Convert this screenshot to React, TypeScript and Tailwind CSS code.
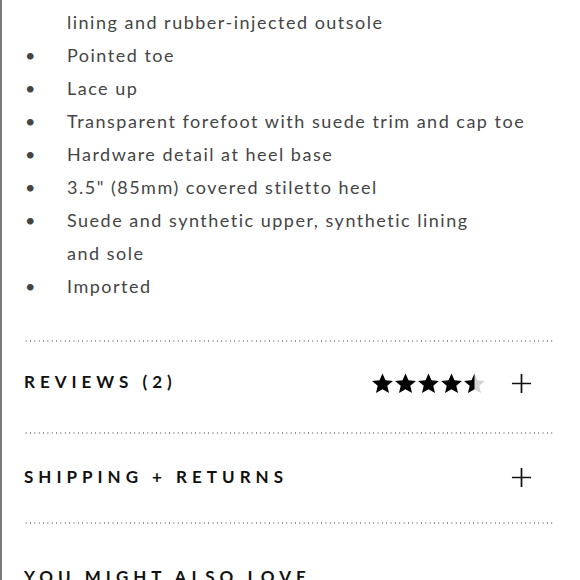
import React from 'react'

const details = [
  { text: 'Suede and leather upper with a cushioned insole, leather', bullet: false },
  { text: 'lining and rubber-injected outsole', bullet: false },
  { text: 'Pointed toe', bullet: true },
  { text: 'Lace up', bullet: true },
  { text: 'Transparent forefoot with suede trim and cap toe', bullet: true },
  { text: 'Hardware detail at heel base', bullet: true },
  { text: '3.5" (85mm) covered stiletto heel', bullet: true },
  { text: 'Suede and synthetic upper, synthetic lining', bullet: true },
  { text: 'and sole', bullet: false },
  { text: 'Imported', bullet: true },
]

const Dotted = () => (
  <div className="h-[2px] w-full shrink-0 bg-[radial-gradient(circle,#8c8c8c_0.8px,transparent_1px)] bg-[length:4.35px_2px] bg-repeat-x" />
)

const starPath = 'M12 1.5l3.1 7.2 7.8.6-5.9 5.1 1.8 7.6L12 17.9 5.2 22l1.8-7.6L1.1 9.3l7.8-.6z'

const Star = () => (
  <svg viewBox="0 0 24 24" className="h-[23px] w-[23px]">
    <path d={starPath} fill="#000" />
  </svg>
)

const HalfStar = () => (
  <svg viewBox="0 0 24 24" className="h-[23px] w-[23px]">
    <defs>
      <clipPath id="half">
        <rect x="0" y="0" width="12" height="24" />
      </clipPath>
    </defs>
    <path d={starPath} fill="#d4d4d4" />
    <path d={starPath} fill="#000" clipPath="url(#half)" />
  </svg>
)

const Plus = () => (
  <svg viewBox="0 0 22 22" className="h-[21px] w-[21px]">
    <path d="M11 1v20M1 11h20" stroke="#111" strokeWidth="1.8" />
  </svg>
)

export default function App() {
  return (
    <div className="h-[580px] w-[580px] overflow-hidden bg-white">
      <div className="flex h-full flex-col border-l-2 border-[#7a7a7a] pl-[22px] pr-[25px] font-['Lato','Liberation_Sans',sans-serif]">
        <ul className="-mt-[27px] shrink-0 text-[18px] leading-[33px] tracking-[1.5px] text-[#454545]">
          {details.map((d, i) => (
            <li key={i} className="flex">
              <span className="w-[43px] shrink-0 pl-[1px]">{d.bullet ? '•' : ''}</span>
              <span className="whitespace-nowrap">{d.text}</span>
            </li>
          ))}
        </ul>

        <div className="mt-[37px] shrink-0">
          <Dotted />
        </div>

        <div className="flex h-[90px] shrink-0 items-start justify-between pt-[30px] pr-[23px]">
          <h2 className="text-[17px] leading-[20px] font-bold tracking-[5px] text-[#111]">REVIEWS (2)</h2>
          <div className="flex items-center gap-[25px]">
            <div className="flex">
              <Star />
              <Star />
              <Star />
              <Star />
              <HalfStar />
            </div>
            <Plus />
          </div>
        </div>

        <Dotted />

        <div className="flex h-[88px] shrink-0 items-start justify-between pt-[33px] pr-[23px]">
          <h2 className="text-[17px] leading-[20px] font-bold tracking-[5px] text-[#111]">SHIPPING + RETURNS</h2>
          <Plus />
        </div>

        <Dotted />

        <h2 className="shrink-0 pt-[43px] text-[17px] leading-[20px] font-bold tracking-[5px] text-[#111]">YOU MIGHT ALSO LOVE</h2>
      </div>
    </div>
  )
}
